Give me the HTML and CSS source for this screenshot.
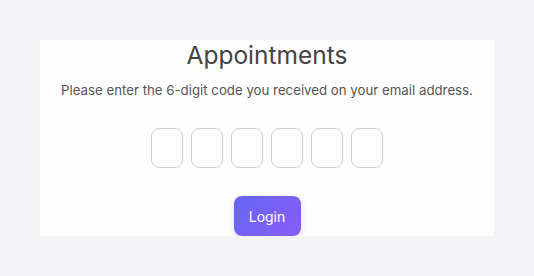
FILE: index.html
```html
<!DOCTYPE html>
<html lang="en">
<head>
  <meta charset="UTF-8" />
  <meta name="viewport" content="width=device-width, initial-scale=1.0"/>
  <title>Appointments</title>
  <link rel="stylesheet" href="styles.css">
</head>
<body>

  <div class="code-card">
    <h1 class="title">Appointments</h1>
    <p class="subtitle">Please enter the 6-digit code you received on your email address.</p>

    <form id="codeForm">
      <div class="code-inputs">
        <input type="text" maxlength="1">
        <input type="text" maxlength="1">
        <input type="text" maxlength="1">
        <input type="text" maxlength="1">
        <input type="text" maxlength="1">
        <input type="text" maxlength="1">
      </div>
      <button type="submit" class="login-button">Login</button>
    </form>
  </div>

</body>
</html>
```

FILE: styles.css
```css
body {
  background-color: #f4f4f6;
  font-family: 'Inter', 'Noto Sans', sans-serif;
  color: #444;
  margin: 0;
  padding-top: 40px;
}

.code-card {
  background-color: #fdfdfd;
  width: 454px;
  height: 196px;
  margin: 0 auto;
  text-align: center;
  overflow: hidden;
}

.title {
  font-size: 24.5px;
  font-weight: 400;
  line-height: 30px;
  margin: 0;
  color: #444;
}

.subtitle {
  font-size: 13.25px;
  color: #555;
  margin: 10px 0 0;
  line-height: 20px;
}

.code-inputs {
  display: flex;
  justify-content: center;
  gap: 8px;
  margin-top: 28px;
}

.code-inputs input {
  width: 32px;
  height: 40px;
  box-sizing: border-box;
  border: 1px solid #cfcfcf;
  border-radius: 8px;
  background: #fff;
  padding: 0;
  text-align: center;
  font-size: 18px;
}

.login-button {
  margin-top: 28px;
  width: 67px;
  height: 40px;
  border: none;
  border-radius: 8px;
  background: linear-gradient(135deg, #6366f1, #8b5cf6);
  color: #fff;
  font-family: inherit;
  font-size: 14px;
  cursor: pointer;
  box-shadow: 0 2px 6px rgba(99, 102, 241, 0.2);
}
```
